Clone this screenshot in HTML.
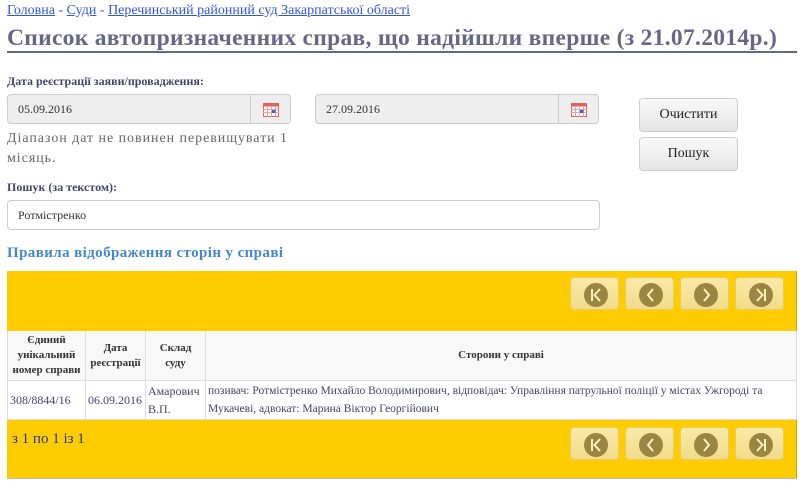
<!DOCTYPE html>
<html><head><meta charset="utf-8"><style>
*{box-sizing:border-box;margin:0;padding:0}
body{width:807px;height:493px;background:#fff;font-family:"Liberation Serif",serif;position:relative;overflow:hidden;color:#333}
.a{position:absolute}
a{color:#3355dd;text-decoration:underline}
.bc{left:7px;top:3px;font-size:14px;color:#3355dd;white-space:nowrap}
.t{left:7px;top:25px;font-size:23.5px;font-weight:bold;color:#666688;white-space:nowrap;letter-spacing:0.3px}
.ln{left:7px;top:51px;width:790px;height:2px;background:#666688}
.lb{font-size:12px;font-weight:bold;color:#444466;white-space:nowrap}
.inp{border:1px solid #ccc;border-radius:4px;background:#eee;font-size:12px;color:#333;padding-left:10px;line-height:28px}
.cal{position:absolute;right:0;top:0;width:40px;height:100%;border-left:1px solid #ccc}
.cal svg{position:absolute;left:12px;top:7px}
.btn{border:1px solid #ccc;border-radius:4px;background:linear-gradient(#fafafa,#e4e4e4);font-size:14px;text-align:center;line-height:31px;color:#222}
.ybox{background:#ffcc00;border-right:1px solid #c8a800;border-bottom:1px solid #bbb}
.nb{position:absolute;width:49px;height:33px;border-radius:4px;background:linear-gradient(#faeaa8,#f0dc8a);border:1px solid #e6cc66}
.nb svg{position:absolute;left:13px;top:5px}
.c{position:absolute;border-right:1px solid #ddd;border-bottom:1px solid #ddd;overflow:hidden}
.h{background:#f8f8f8;font-weight:bold;color:#333;font-size:11px;line-height:15px;text-align:center;display:flex;align-items:center;justify-content:center;top:331px;height:50px}
.d{top:381px;height:39px;font-size:12px;color:#444466;line-height:18px;padding:0 2px;display:flex;align-items:center}
</style></head><body>
<div class="a bc"><a>Головна</a> - <a>Суди</a> - <a>Перечинський районний суд Закарпатської області</a></div>
<div class="a t">Список автопризначенних справ, що надійшли вперше (з 21.07.2014р.)</div>
<div class="a ln"></div>
<div class="a lb" style="left:7px;top:74px">Дата реєстрації заяви/провадження:</div>
<div class="a inp" style="left:7px;top:94px;width:284px;height:30px">05.09.2016<div class="cal"><svg width="16" height="15" viewBox="0 0 16 15"><rect x="0.5" y="1.5" width="15" height="13" fill="#fff" stroke="#e06060"/><rect x="0.5" y="1.5" width="15" height="3" fill="#e06060"/><path d="M0 7.5H16M0 10.5H16M4.5 4V15M8.5 4V15M12.5 4V15" stroke="#f0a0a0"/><rect x="9" y="8" width="3.5" height="3" fill="#3366dd"/></svg></div></div>
<div class="a inp" style="left:315px;top:94px;width:284px;height:30px">27.09.2016<div class="cal"><svg width="16" height="15" viewBox="0 0 16 15"><rect x="0.5" y="1.5" width="15" height="13" fill="#fff" stroke="#e06060"/><rect x="0.5" y="1.5" width="15" height="3" fill="#e06060"/><path d="M0 7.5H16M0 10.5H16M4.5 4V15M8.5 4V15M12.5 4V15" stroke="#f0a0a0"/><rect x="9" y="8" width="3.5" height="3" fill="#3366dd"/></svg></div></div>
<div class="a" style="left:7px;top:129px;width:300px;font-size:14px;line-height:20px;color:#666;letter-spacing:0.95px">Діапазон дат не повинен перевищувати 1 місяць.</div>
<div class="a btn" style="left:639px;top:98px;width:99px;height:34px">Очистити</div>
<div class="a btn" style="left:639px;top:137px;width:99px;height:34px">Пошук</div>
<div class="a lb" style="left:7px;top:180px">Пошук (за текстом):</div>
<div class="a inp" style="left:7px;top:200px;width:593px;height:30px;background:#fff">Ротмістренко</div>
<div class="a" style="left:7px;top:245px;font-size:15px;font-weight:bold;color:#4488cc;letter-spacing:0.4px;white-space:nowrap">Правила відображення сторін у справі</div>
<div class="a ybox" style="left:7px;top:271px;width:790px;height:61px">
<div class="nb" style="left:563px;top:6px"><svg width="24" height="24"><circle cx="12" cy="12" r="12" fill="#9a8640"/><path d="M8 6V18M16 6L10.5 12L16 18" stroke="#fff3c0" stroke-width="2" fill="none"/></svg></div>
<div class="nb" style="left:618px;top:6px"><svg width="24" height="24"><circle cx="12" cy="12" r="12" fill="#9a8640"/><path d="M14 6L9 12L14 18" stroke="#fff3c0" stroke-width="2" fill="none"/></svg></div>
<div class="nb" style="left:673px;top:6px"><svg width="24" height="24"><circle cx="12" cy="12" r="12" fill="#9a8640"/><path d="M10 6L15 12L10 18" stroke="#fff3c0" stroke-width="2" fill="none"/></svg></div>
<div class="nb" style="left:728px;top:6px"><svg width="24" height="24"><circle cx="12" cy="12" r="12" fill="#9a8640"/><path d="M8 6L13.5 12L8 18M16 6V18" stroke="#fff3c0" stroke-width="2" fill="none"/></svg></div>
</div>
<div class="a" style="left:7px;top:331px;width:790px;height:89px;border-left:1px solid #ddd"></div>
<div class="c h" style="left:7px;width:79px;border-left:1px solid #ddd">Єдиний унікальний номер справи</div>
<div class="c h" style="left:86px;width:60px">Дата реєстрації</div>
<div class="c h" style="left:146px;width:60px;padding:0 12px">Склад суду</div>
<div class="c h" style="left:206px;width:591px">Сторони у справі</div>
<div class="c d" style="left:7px;width:79px;border-left:1px solid #ddd">308/8844/16</div>
<div class="c d" style="left:86px;width:60px">06.09.2016</div>
<div class="c d" style="left:146px;width:60px">Амарович В.П.</div>
<div class="c d" style="left:206px;width:591px;font-size:11.5px">позивач: Ротмістренко Михайло Володимирович, відповідач: Управління патрульної поліції у містах Ужгороді та Мукачеві, адвокат: Марина Віктор Георгійович</div>
<div class="a ybox" style="left:7px;top:420px;width:790px;height:59px">
<div class="a" style="left:5px;top:11px;font-size:15px;color:#2233aa">з 1 по 1 із 1</div>
<div class="nb" style="left:563px;top:7px"><svg width="24" height="24"><circle cx="12" cy="12" r="12" fill="#9a8640"/><path d="M8 6V18M16 6L10.5 12L16 18" stroke="#fff3c0" stroke-width="2" fill="none"/></svg></div>
<div class="nb" style="left:618px;top:7px"><svg width="24" height="24"><circle cx="12" cy="12" r="12" fill="#9a8640"/><path d="M14 6L9 12L14 18" stroke="#fff3c0" stroke-width="2" fill="none"/></svg></div>
<div class="nb" style="left:673px;top:7px"><svg width="24" height="24"><circle cx="12" cy="12" r="12" fill="#9a8640"/><path d="M10 6L15 12L10 18" stroke="#fff3c0" stroke-width="2" fill="none"/></svg></div>
<div class="nb" style="left:728px;top:7px"><svg width="24" height="24"><circle cx="12" cy="12" r="12" fill="#9a8640"/><path d="M8 6L13.5 12L8 18M16 6V18" stroke="#fff3c0" stroke-width="2" fill="none"/></svg></div>
</div>
</body></html>
